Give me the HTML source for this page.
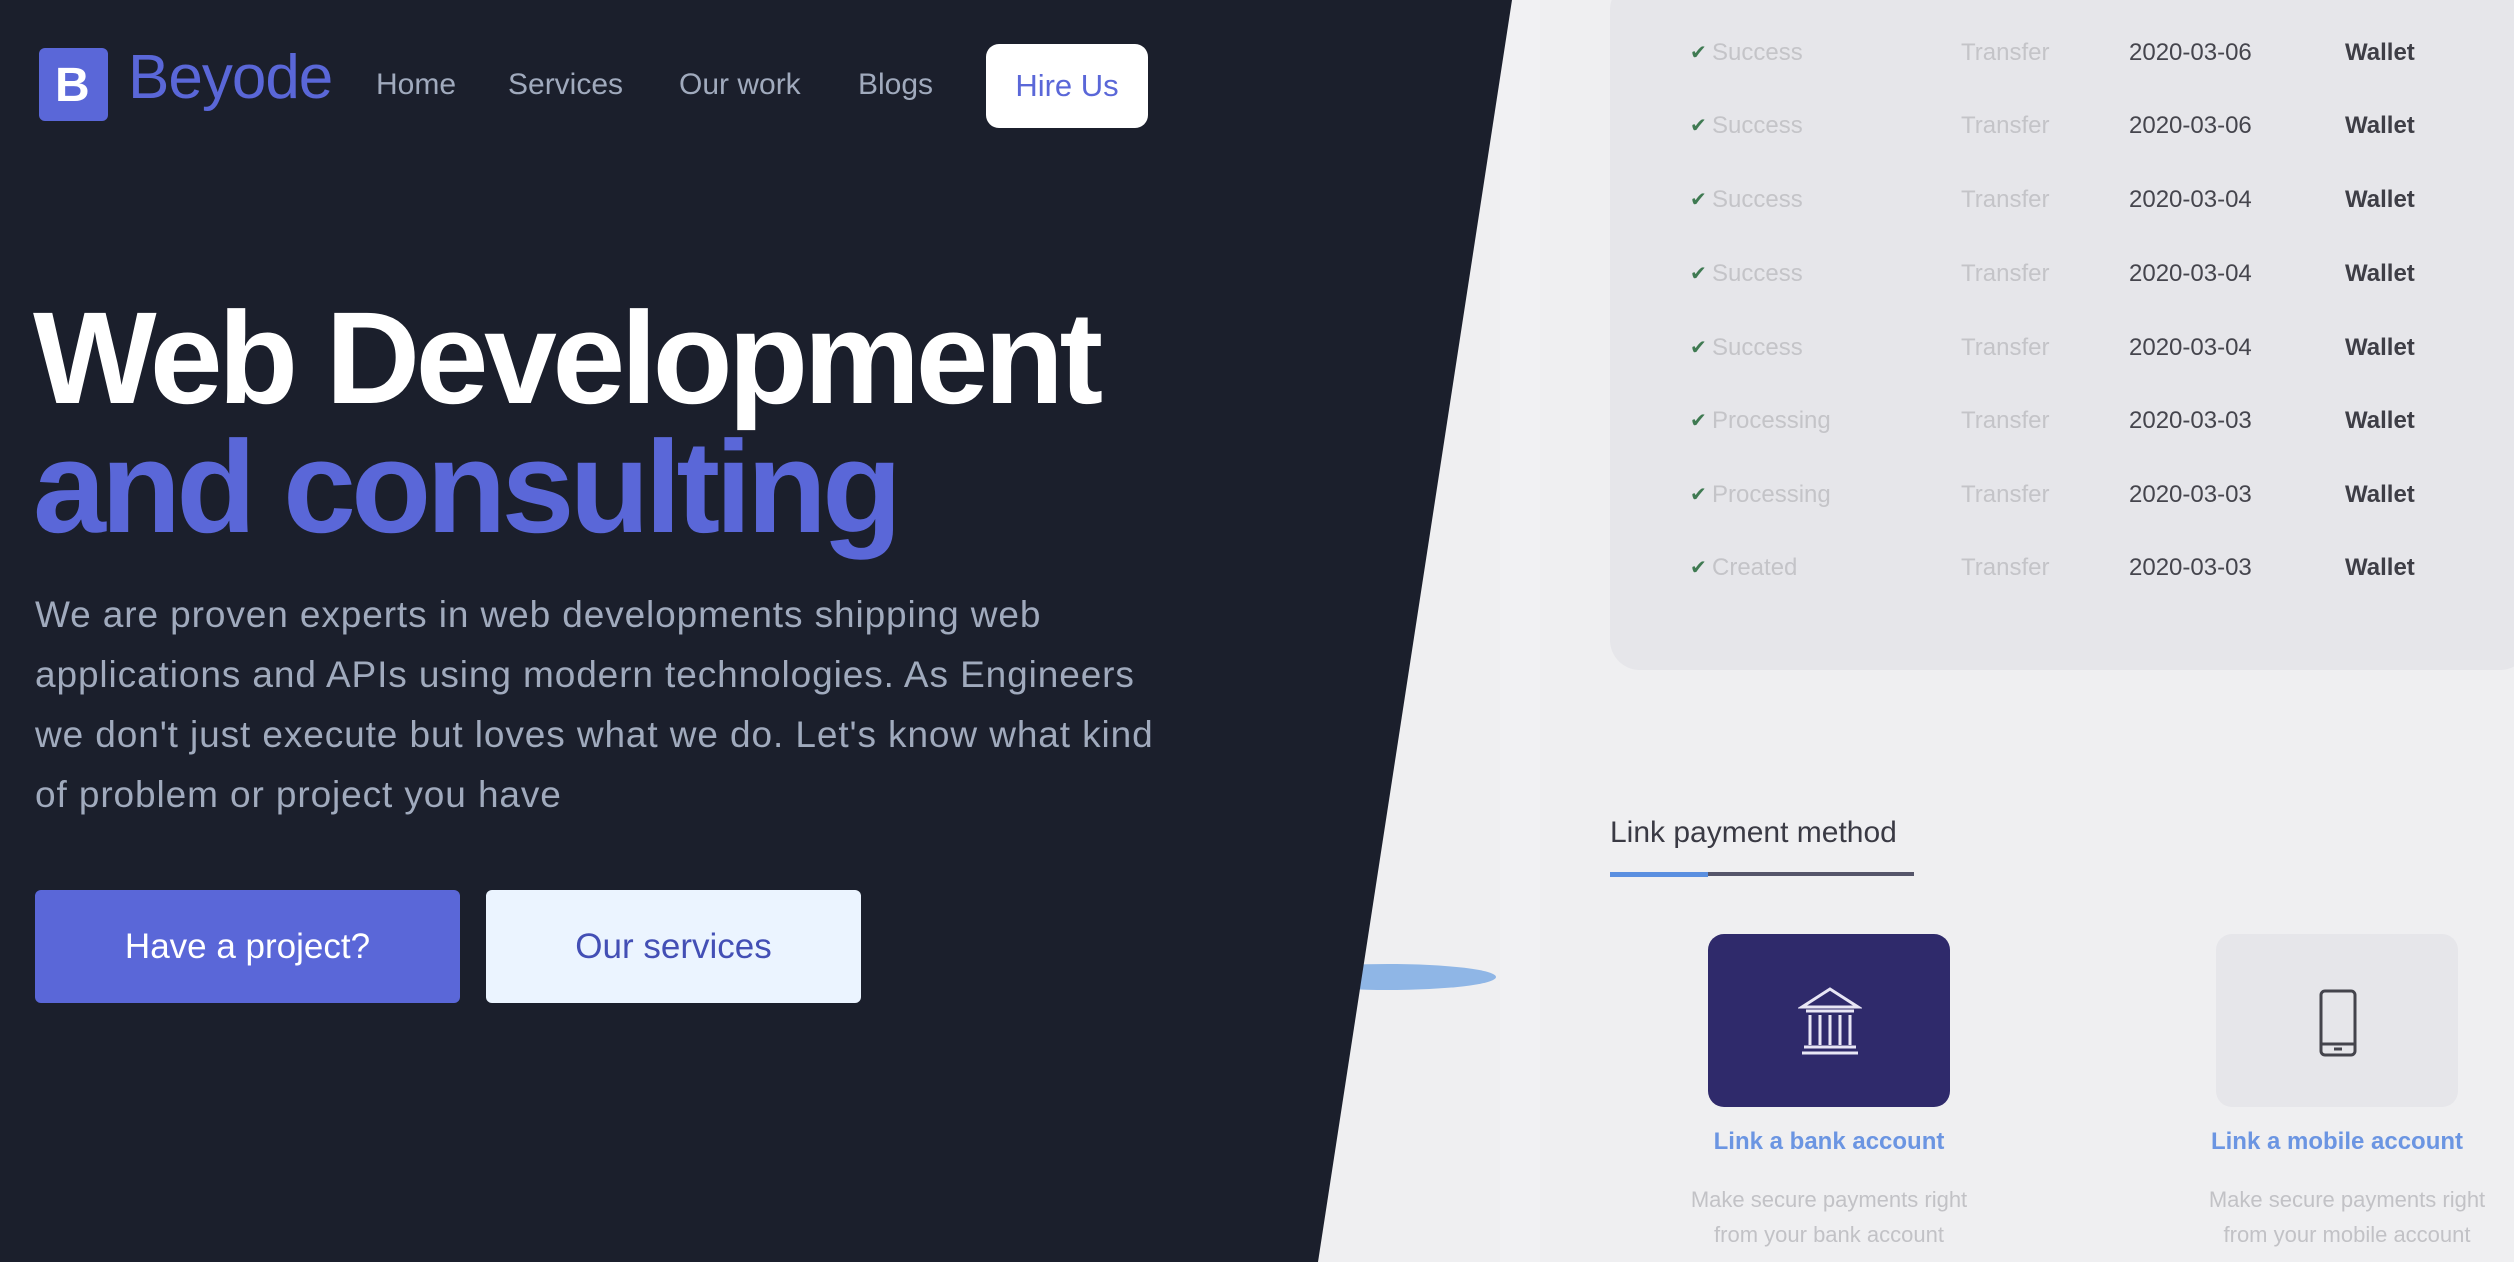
<!DOCTYPE html>
<html><head><meta charset="utf-8"><style>
*{margin:0;padding:0;box-sizing:border-box}
body{width:2514px;height:1262px;overflow:hidden;background:#efeff1;font-family:"Liberation Sans",sans-serif;position:relative}
.a{position:absolute;white-space:nowrap}
#dark{position:absolute;left:0;top:0;width:2514px;height:1262px;background:#1b1f2c;clip-path:polygon(0 0,1512px 0,1318px 1262px,0 1262px)}
.row{position:absolute;left:1690px;font-size:24px;height:30px;line-height:30px}
.row span{position:absolute;white-space:nowrap}
.chk{left:0;color:#3f7a52;font-size:20px}
.st{left:22px;color:#c4c4c8}
.tr{left:271px;color:#c4c4c8}
.dt{left:439px;color:#45454d}
.wl{left:655px;color:#3e3e46;font-weight:bold}
</style></head><body>
<div class="a" style="left:1500px;top:0;width:40px;height:1262px;background:#f1f1f3"></div>
<div class="a" style="left:1610px;top:-20px;width:920px;height:690px;background:#e6e6ea;border-radius:30px"></div>
<div class="row" style="top:38px"><span class="chk">✔</span><span class="st">Success</span><span class="tr">Transfer</span><span class="dt">2020-03-06</span><span class="wl">Wallet</span></div>
<div class="row" style="top:111px"><span class="chk">✔</span><span class="st">Success</span><span class="tr">Transfer</span><span class="dt">2020-03-06</span><span class="wl">Wallet</span></div>
<div class="row" style="top:185px"><span class="chk">✔</span><span class="st">Success</span><span class="tr">Transfer</span><span class="dt">2020-03-04</span><span class="wl">Wallet</span></div>
<div class="row" style="top:259px"><span class="chk">✔</span><span class="st">Success</span><span class="tr">Transfer</span><span class="dt">2020-03-04</span><span class="wl">Wallet</span></div>
<div class="row" style="top:333px"><span class="chk">✔</span><span class="st">Success</span><span class="tr">Transfer</span><span class="dt">2020-03-04</span><span class="wl">Wallet</span></div>
<div class="row" style="top:406px"><span class="chk">✔</span><span class="st">Processing</span><span class="tr">Transfer</span><span class="dt">2020-03-03</span><span class="wl">Wallet</span></div>
<div class="row" style="top:480px"><span class="chk">✔</span><span class="st">Processing</span><span class="tr">Transfer</span><span class="dt">2020-03-03</span><span class="wl">Wallet</span></div>
<div class="row" style="top:553px"><span class="chk">✔</span><span class="st">Created</span><span class="tr">Transfer</span><span class="dt">2020-03-03</span><span class="wl">Wallet</span></div>
<div class="a" style="left:1610px;top:816px;font-size:30px;color:#3a3a44">Link payment method</div>
<div class="a" style="left:1610px;top:872px;width:304px;height:4px;background:#55556a"></div>
<div class="a" style="left:1610px;top:872px;width:98px;height:5px;background:#5a8fe0"></div>
<div class="a" style="left:1708px;top:934px;width:242px;height:173px;background:#2f2a6b;border-radius:16px"></div>
<svg class="a" style="left:1798px;top:985px" width="64" height="72" viewBox="0 0 64 72" fill="none" stroke="#e8e6f5" stroke-width="3"><path d="M4 22 L32 4 L60 22 Z M8 26h48 M12 30v30 M22 30v30 M32 30v30 M42 30v30 M52 30v30 M6 62h52 M4 68h56"/></svg>
<div class="a" style="left:2216px;top:934px;width:242px;height:173px;background:#e6e6ea;border-radius:16px"></div>
<svg class="a" style="left:2318px;top:988px" width="40" height="70" viewBox="0 0 40 70" fill="none" stroke="#44444c" stroke-width="3"><rect x="3" y="3" width="34" height="64" rx="4"/><path d="M3 56h34 M16 61h8"/></svg>
<div class="a" style="left:1708px;width:242px;top:1128px;text-align:center;font-size:24px;font-weight:bold;color:#6b95e2">Link a bank account</div>
<div class="a" style="left:1678px;width:302px;top:1182px;text-align:center;font-size:22px;color:#c2c2c6;line-height:35px;white-space:normal">Make secure payments right from your bank account</div>
<div class="a" style="left:2206px;width:262px;top:1128px;text-align:center;font-size:24px;font-weight:bold;color:#6b95e2">Link a mobile account</div>
<div class="a" style="left:2186px;width:322px;top:1182px;text-align:center;font-size:22px;color:#c2c2c6;line-height:35px;white-space:normal">Make secure payments right from your mobile account</div>
<div class="a" style="left:1280px;top:964px;width:216px;height:26px;border-radius:50%;background:#8fb6e6"></div>

<div id="dark"></div>
<div class="a" style="left:39px;top:48px;width:69px;height:73px;background:#5a67d8;border-radius:6px"></div>
<div class="a" style="left:55px;top:58px;font-size:48px;font-weight:bold;color:#fff">B</div>
<div class="a" style="left:128px;top:42px;font-size:62px;color:#5a67d8;letter-spacing:-1px">Beyode</div>
<div class="a" style="left:376px;top:68px;font-size:30px;color:#a0aabd">Home</div>
<div class="a" style="left:508px;top:68px;font-size:30px;color:#a0aabd">Services</div>
<div class="a" style="left:679px;top:68px;font-size:30px;color:#a0aabd">Our work</div>
<div class="a" style="left:858px;top:68px;font-size:30px;color:#a0aabd">Blogs</div>
<div class="a" style="left:986px;top:44px;width:162px;height:84px;background:#fff;border-radius:13px;text-align:center;line-height:84px;font-size:31px;color:#5a67d8">Hire Us</div>
<div class="a" style="left:33px;top:282px;font-size:131px;font-weight:bold;color:#fff;letter-spacing:-4.5px">Web Development</div>
<div class="a" style="left:33px;top:411px;font-size:131px;font-weight:bold;color:#5a67d8;letter-spacing:-4.8px">and consulting</div>
<div class="a" style="left:35px;top:585px;width:1300px;font-size:37px;line-height:60px;color:#a0aabd;white-space:normal;letter-spacing:0.9px">We are proven experts in web developments shipping web<br>applications and APIs using modern technologies. As Engineers<br>we don't just execute but loves what we do. Let's know what kind<br>of problem or project you have</div>
<div class="a" style="left:35px;top:890px;width:425px;height:113px;background:#5a67d8;border-radius:6px;text-align:center;line-height:113px;font-size:35px;color:#fff">Have a project?</div>
<div class="a" style="left:486px;top:890px;width:375px;height:113px;background:#ebf4ff;border-radius:6px;text-align:center;line-height:113px;font-size:35px;color:#434fb5">Our services</div>
</body></html>
